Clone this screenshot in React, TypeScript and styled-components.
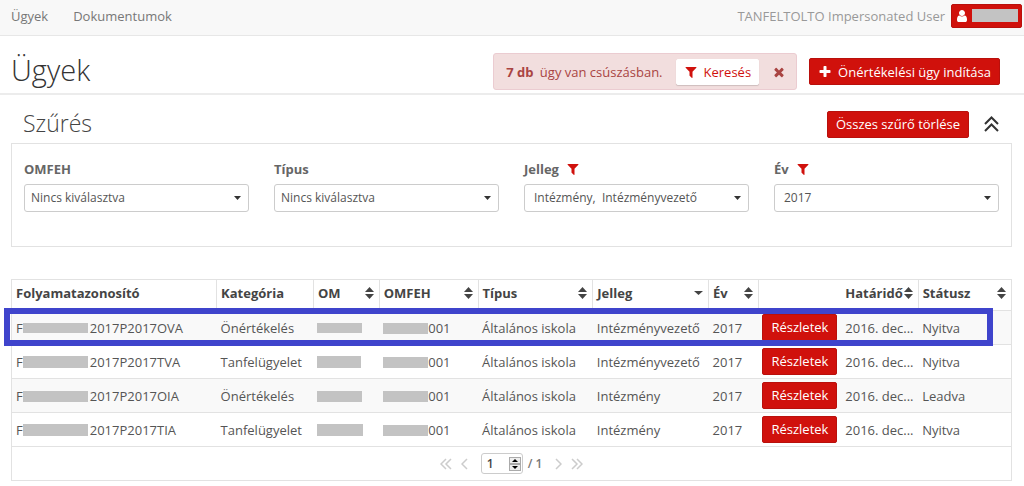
import React from "react";
import styled, { createGlobalStyle } from "styled-components";

const red = "#d0110c";
const line = "#e2e2e2";

const GlobalStyle = createGlobalStyle`
  * { box-sizing: border-box; }
  body {
    margin: 0;
    background: #fff;
    color: #555;
    font-family: "Open Sans", "Noto Sans", sans-serif;
    font-size: 13px;
    line-height: 20px;
  }
  button, input, select { font: inherit; color: inherit; }
`;

const NavBar = styled.nav`
  display: flex;
  align-items: center;
  justify-content: space-between;
  height: 36px;
  padding: 0 2px 4px 11px;
  background: #f8f8f8;
  border-bottom: 1px solid #e7e7e7;
`;

const NavGroup = styled.div<{ $gap: number }>`
  display: flex;
  align-items: center;
  gap: ${(p) => p.$gap}px;
  color: #999;
`;

const NavLink = styled.a`
  color: #777;
  text-decoration: none;
`;

const Button = styled.button`
  display: inline-flex;
  align-items: center;
  gap: 6px;
  height: 27px;
  padding: 0 8px;
  color: #fff;
  background: ${red};
  border: 1px solid #b9100c;
  border-radius: 2px;
  white-space: nowrap;
  cursor: pointer;
`;

const UserButton = styled(Button)`
  height: 24px;
  padding: 0 3px;
  gap: 3px;
`;

const PlainButton = styled(Button)`
  height: 26px;
  padding: 0 7px;
  color: ${red};
  background: #fff;
  border-color: #fff;
  box-shadow: 0 1px 1px rgba(0, 0, 0, 0.15);
`;

const IconButton = styled.button<{ $color: string }>`
  display: inline-flex;
  padding: 0;
  border: 0;
  background: none;
  color: ${(p) => p.$color};
  cursor: pointer;
`;

const PageHeader = styled.header`
  display: flex;
  align-items: center;
  justify-content: space-between;
  height: 59px;
  padding: 0 24px 0 11px;
  border-bottom: 2px solid #ececec;
`;

const Title = styled.h1`
  margin: 0;
  padding-top: 10px;
  color: #333;
  font-size: 29px;
  line-height: 40px;
  font-weight: 300;
`;

const HeaderActions = styled.div`
  display: flex;
  align-items: center;
  gap: 12px;
  padding-top: 14px;
`;

const Alert = styled.div`
  display: flex;
  align-items: center;
  height: 37px;
  padding: 0 10px 0 12px;
  gap: 13px;
  color: #a94442;
  background: #f2dede;
  border: 1px solid #ebccd1;
  border-radius: 3px;
  white-space: nowrap;

  strong { margin-right: 3px; }
`;

const Content = styled.main`
  padding: 0 12px 0 11px;
`;

const FilterHead = styled.div`
  display: flex;
  align-items: center;
  justify-content: space-between;
  height: 48px;
  padding: 10px 13px 0 12px;
`;

const SubTitle = styled.h2`
  margin: 0;
  padding-bottom: 2px;
  color: #444;
  font-size: 23px;
  line-height: 30px;
  font-weight: 300;
`;

const FilterActions = styled.div`
  display: flex;
  align-items: center;
  gap: 15px;
`;

const FilterPanel = styled.section`
  display: grid;
  grid-template-columns: repeat(4, 1fr);
  gap: 25px;
  padding: 15px 12px 34px;
  border: 1px solid ${line};
`;

const Field = styled.div`
  display: flex;
  flex-direction: column;
  gap: 5px;
`;

const FieldLabel = styled.label`
  display: flex;
  align-items: center;
  gap: 7px;
  color: #666;
  font-weight: 700;
`;

const SelectBox = styled.div`
  display: grid;
  align-items: center;

  > * { grid-area: 1 / 1; }
  > svg { justify-self: end; margin-right: 8px; pointer-events: none; }
`;

const Select = styled.select<{ $inset: number }>`
  appearance: none;
  width: 100%;
  height: 28px;
  padding: 0 24px 0 ${(p) => p.$inset}px;
  background: #fff;
  border: 1px solid #ccc;
  border-radius: 3px;
  font-size: 12px;
  white-space: pre;
`;

const TableFrame = styled.section`
  position: relative;
  margin-top: 32px;
  border: 1px solid ${line};
`;

const Table = styled.table`
  width: 100%;
  table-layout: fixed;
  border-collapse: collapse;
`;

const Th = styled.th<{ $divider?: boolean }>`
  height: 30px;
  padding: 0 5px 3px 4px;
  color: #444;
  text-align: left;
  border-right: ${(p) => (p.$divider ? `1px solid ${line}` : "0")};
  white-space: nowrap;
`;

const ThInner = styled.div`
  display: flex;
  align-items: center;
  justify-content: space-between;

  > svg { flex-shrink: 0; }
`;

const Tr = styled.tr`
  border-top: 1px solid ${line};
  &:nth-child(odd) { background: #f9f9f9; }
`;

const Td = styled.td`
  height: 34px;
  padding: 2px 4px 0;
  white-space: nowrap;
`;

const ActionTd = styled(Td)`
  padding-top: 0;
`;

const Cell = styled.div`
  display: flex;
  align-items: center;
`;

const Mask = styled.span<{ $w: number; $h: number; $gap?: number }>`
  width: ${(p) => p.$w}px;
  height: ${(p) => p.$h}px;
  margin-right: ${(p) => p.$gap ?? 0}px;
  background: #c3c3c3;
`;

const Pager = styled.div`
  display: flex;
  align-items: center;
  justify-content: center;
  height: 34px;
  gap: 9px;
  border-top: 1px solid ${line};
  color: #777;
  font-size: 12px;
  font-weight: 600;
`;

const PageCount = styled.div`
  display: flex;
  align-items: center;
  gap: 5px;
  margin: 0 4px;
`;

const PageBox = styled.div`
  display: flex;
  align-items: center;
  width: 42px;
  height: 21px;
  padding: 0 1px 0 5px;
  border: 1px solid #ccc;
  border-radius: 3px;
  background: #fff;
`;

const PageInput = styled.input`
  flex: 1;
  min-width: 0;
  padding: 0;
  border: 0;
  outline: 0;
  background: none;
  color: #444;
`;

const Stepper = styled.div`
  display: flex;
  flex-direction: column;
`;

const Step = styled.button`
  display: flex;
  align-items: center;
  justify-content: center;
  width: 12px;
  height: 7px;
  padding: 0;
  border: 1px solid #aaa;
  background: #eee;
`;

const Highlight = styled.div`
  position: absolute;
  top: 28px;
  left: -8px;
  right: 18px;
  height: 38px;
  border: 6px solid #3f44cc;
  pointer-events: none;
`;

const glyphs = {
  filter:
    "M1595 295q17 41-14 70l-493 493v742q0 42-39 59-13 5-25 5-27 0-45-19l-256-256q-19-19-19-45v-486l-493-493q-31-29-14-70 17-39 59-39h1280q42 0 59 39z",
  plus: "M1600 736v192q0 40-28 68t-68 28h-416v416q0 40-28 68t-68 28h-192q-40 0-68-28t-28-68v-416h-416q-40 0-68-28t-28-68v-192q0-40 28-68t68-28h416v-416q0-40 28-68t68-28h192q40 0 68 28t28 68v416h416q40 0 68 28t28 68z",
  times:
    "M1490 1322q0 40-28 68l-136 136q-28 28-68 28t-68-28l-294-294-294 294q-28 28-68 28t-68-28l-136-136q-28-28-28-68t28-68l294-294-294-294q-28-28-28-68t28-68l136-136q28-28 68-28t68 28l294 294 294-294q28-28 68-28t68 28l136 136q28 28 28 68t-28 68l-294 294 294 294q28 28 28 68z",
  user: "M1536 1399q0 109-62.5 187t-150.5 78h-854q-88 0-150.5-78t-62.5-187q0-85 8.5-160.5t31.5-152 58.5-131 94-89 134.5-34.5q131 128 313 128t313-128q76 0 134.5 34.5t94 89 58.5 131 31.5 152 8.5 160.5zm-256-887q0 159-112.5 271.5t-271.5 112.5-271.5-112.5-112.5-271.5 112.5-271.5 271.5-112.5 271.5 112.5 112.5 271.5z",
};

const Glyph = ({ name, size = 14, color = "currentColor" }: { name: keyof typeof glyphs; size?: number; color?: string }) => (
  <svg width={size} height={size} viewBox="0 0 1792 1792" fill={color} aria-hidden="true">
    <path d={glyphs[name]} />
  </svg>
);

const Caret = () => (
  <svg width="7" height="4" viewBox="0 0 7 4" fill="#333" aria-hidden="true">
    <path d="M0 0h7L3.500 4z" />
  </svg>
);

const SortIcon = ({ mode }: { mode: "both" | "down" }) => (
  <svg width="9" height="12" viewBox="0 0 9 12" fill="#444" aria-hidden="true">
    {mode === "both" && <path d="M0 5h9L4.500 0z" />}
    {mode === "both" ? <path d="M0 7h9L4.500 12z" /> : <path d="M0 4h9L4.500 8z" />}
  </svg>
);

const Chevron = ({ d, w }: { d: string; w: number }) => (
  <svg width={w} height="12" viewBox={`0 0 ${w} 12`} fill="none" stroke="#ccc" strokeWidth="1.500" aria-hidden="true">
    <path d={d} />
  </svg>
);

const filters = [
  { id: "omfeh", label: "OMFEH", value: "Nincs kiválasztva", active: false },
  { id: "tipus", label: "Típus", value: "Nincs kiválasztva", active: false },
  { id: "jelleg", label: "Jelleg", value: "Intézmény,\u00a0 Intézményvezető", active: true },
  { id: "ev", label: "Év", value: "2017", active: true },
];

type Column = { label: string; width: number; sort?: "both" | "down"; divider?: boolean };

const columns: Column[] = [
  { label: "Folyamatazonosító", width: 205, divider: true },
  { label: "Kategória", width: 97, divider: true },
  { label: "OM", width: 66, sort: "both", divider: true },
  { label: "OMFEH", width: 99, sort: "both", divider: true },
  { label: "Típus", width: 115, sort: "both", divider: true },
  { label: "Jelleg", width: 116, sort: "down", divider: true },
  { label: "Év", width: 50, sort: "both", divider: true },
  { label: "", width: 83 },
  { label: "Határidő", width: 77, sort: "both", divider: true },
  { label: "Státusz", width: 93, sort: "both" },
];

const totalWidth = columns.reduce((sum, c) => sum + c.width, 0);

const rows = [
  { code: "2017P2017OVA", category: "Önértékelés", kind: "Intézményvezető", status: "Nyitva", idMask: 65, omMask: 45, h: 10 },
  { code: "2017P2017TVA", category: "Tanfelügyelet", kind: "Intézményvezető", status: "Nyitva", idMask: 65, omMask: 44, h: 12 },
  { code: "2017P2017OIA", category: "Önértékelés", kind: "Intézmény", status: "Leadva", idMask: 65, omMask: 45, h: 11 },
  { code: "2017P2017TIA", category: "Tanfelügyelet", kind: "Intézmény", status: "Nyitva", idMask: 65, omMask: 46, h: 12 },
];

export default function App() {
  return (
    <>
      <GlobalStyle />
      <NavBar>
        <NavGroup $gap={25}>
          <NavLink href="#ugyek">Ügyek</NavLink>
          <NavLink href="#dokumentumok">Dokumentumok</NavLink>
        </NavGroup>
        <NavGroup $gap={6}>
          <span>TANFELTOLTO Impersonated User</span>
          <UserButton type="button" aria-label="Felhasználó">
            <Glyph name="user" />
            <Mask $w={46} $h={13} />
          </UserButton>
        </NavGroup>
      </NavBar>

      <PageHeader>
        <Title>Ügyek</Title>
        <HeaderActions>
          <Alert role="alert">
            <span>
              <strong>7 db</strong> ügy van csúszásban.
            </span>
            <PlainButton type="button">
              <Glyph name="filter" />
              Keresés
            </PlainButton>
            <IconButton type="button" $color="#a94442" aria-label="Bezárás">
              <Glyph name="times" />
            </IconButton>
          </Alert>
          <Button type="button">
            <Glyph name="plus" />
            Önértékelési ügy indítása
          </Button>
        </HeaderActions>
      </PageHeader>

      <Content>
        <FilterHead>
          <SubTitle>Szűrés</SubTitle>
          <FilterActions>
            <Button type="button">Összes szűrő törlése</Button>
            <IconButton type="button" $color="#333" aria-label="Összecsukás">
              <svg width="15" height="16" viewBox="0 0 15 16" fill="none" stroke="currentColor" strokeWidth="2">
                <path d="M1 8l6.500-6.500L14 8M1 15l6.500-6.500L14 15" />
              </svg>
            </IconButton>
          </FilterActions>
        </FilterHead>

        <FilterPanel>
          {filters.map((f) => (
            <Field key={f.id}>
              <FieldLabel htmlFor={f.id}>
                {f.label}
                {f.active && <Glyph name="filter" color={red} />}
              </FieldLabel>
              <SelectBox>
                <Select id={f.id} $inset={f.active ? 9 : 6}>
                  <option>{f.value}</option>
                </Select>
                <Caret />
              </SelectBox>
            </Field>
          ))}
        </FilterPanel>

        <TableFrame>
          <Table>
            <colgroup>
              {columns.map((c, i) => (
                <col key={i} style={{ width: `${(c.width / totalWidth) * 100}%` }} />
              ))}
            </colgroup>
            <thead>
              <tr>
                {columns.map((c, i) => (
                  <Th key={i} $divider={c.divider}>
                    <ThInner>
                      {c.label}
                      {c.sort && <SortIcon mode={c.sort} />}
                    </ThInner>
                  </Th>
                ))}
              </tr>
            </thead>
            <tbody>
              {rows.map((r) => (
                <Tr key={r.code}>
                  <Td>
                    <Cell>
                      F
                      <Mask $w={r.idMask} $h={r.h} $gap={2} />
                      {r.code}
                    </Cell>
                  </Td>
                  <Td>{r.category}</Td>
                  <Td>
                    <Cell>
                      <Mask $w={r.omMask} $h={r.h} />
                    </Cell>
                  </Td>
                  <Td>
                    <Cell>
                      <Mask $w={45} $h={11} />
                      001
                    </Cell>
                  </Td>
                  <Td>Általános iskola</Td>
                  <Td>{r.kind}</Td>
                  <Td>2017</Td>
                  <ActionTd>
                    <Cell>
                      <Button type="button">Részletek</Button>
                    </Cell>
                  </ActionTd>
                  <Td>2016. dec...</Td>
                  <Td>{r.status}</Td>
                </Tr>
              ))}
            </tbody>
          </Table>
          <Pager>
            <IconButton type="button" $color="#ccc" aria-label="Első oldal">
              <Chevron w={12} d="M6 1L1 6l5 5M11 1L6 6l5 5" />
            </IconButton>
            <IconButton type="button" $color="#ccc" aria-label="Előző oldal">
              <Chevron w={7} d="M6 1L1 6l5 5" />
            </IconButton>
            <PageCount>
              <PageBox>
                <PageInput aria-label="Oldal" defaultValue="1" inputMode="numeric" />
                <Stepper>
                  <Step type="button" aria-label="Növelés">
                    <svg width="6" height="3" viewBox="0 0 6 3" fill="#000"><path d="M0 3h6L3 0z" /></svg>
                  </Step>
                  <Step type="button" aria-label="Csökkentés">
                    <svg width="6" height="3" viewBox="0 0 6 3" fill="#000"><path d="M0 0h6L3 3z" /></svg>
                  </Step>
                </Stepper>
              </PageBox>
              <span>/ 1</span>
            </PageCount>
            <IconButton type="button" $color="#ccc" aria-label="Következő oldal">
              <Chevron w={7} d="M1 1l5 5-5 5" />
            </IconButton>
            <IconButton type="button" $color="#ccc" aria-label="Utolsó oldal">
              <Chevron w={12} d="M1 1l5 5-5 5M6 1l5 5-5 5" />
            </IconButton>
          </Pager>
          <Highlight />
        </TableFrame>
      </Content>
    </>
  );
}
